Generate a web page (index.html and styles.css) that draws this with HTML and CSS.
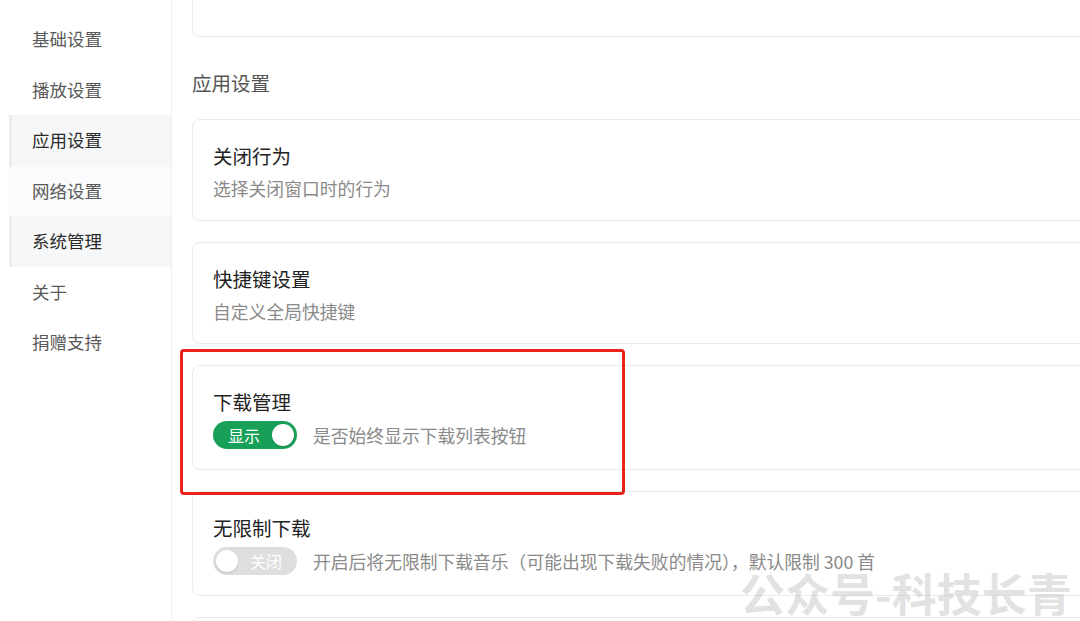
FILE: index.html
```html
<!DOCTYPE html>
<html lang="zh-CN">
<head>
    <meta charset="UTF-8">
    <title>应用设置</title>
    <link rel="stylesheet" href="styles.css">
</head>
<body>
    <div class="layout">
        <div class="sidebar">
            <div class="nav-item">基础设置</div>
            <div class="nav-item">播放设置</div>
            <div class="nav-item active">应用设置</div>
            <div class="nav-item hover">网络设置</div>
            <div class="nav-item active">系统管理</div>
            <div class="nav-item">关于</div>
            <div class="nav-item">捐赠支持</div>
        </div>

        <div class="content">
            <div class="card cut"></div>

            <div class="section-title">应用设置</div>

            <div class="card">
                <div class="card-title">关闭行为</div>
                <div class="card-desc">选择关闭窗口时的行为</div>
            </div>

            <div class="card">
                <div class="card-title">快捷键设置</div>
                <div class="card-desc">自定义全局快捷键</div>
            </div>

            <div class="card">
                <div class="card-title">下载管理</div>
                <div class="card-row">
                    <div class="switch on"><span class="switch-text">显示</span><span class="knob"></span></div>
                    <div class="card-desc">是否始终显示下载列表按钮</div>
                </div>
            </div>

            <div class="card">
                <div class="card-title">无限制下载</div>
                <div class="card-row">
                    <div class="switch off"><span class="knob"></span><span class="switch-text">关闭</span></div>
                    <div class="card-desc">开启后将无限制下载音乐（可能出现下载失败的情况），默认限制 300 首</div>
                </div>
            </div>

            <div class="card"></div>
        </div>

        <!-- 标注框和水印 -->
        <div class="mark"></div>
        <div class="watermark">公众号-科技长青</div>
    </div>
</body>
</html>
```

FILE: styles.css
```css
body {
    margin: 0;
    background: #fff;
    font-family: "Noto Sans CJK SC", "Noto Sans", sans-serif;
}
.layout {
    position: relative;
    display: flex;
    width: 1080px;
    height: 621px;
    overflow: hidden;
}
.sidebar {
    width: 162px;
    flex-shrink: 0;
    padding: 14px 0 0 9px;
    border-right: 1px solid #efefef;
}
.nav-item {
    height: 50.5px;
    line-height: 50.5px;
    padding-left: 23px;
    font-size: 17.5px;
    color: #595959;
}
.nav-item.active {
    background: #f6f7f9;
    border-left: 3px solid #ececee;
    padding-left: 20px;
    color: #2a2a2a;
}
.nav-item.hover {
    background: #fafbfc;
}
.content {
    flex: 1;
    padding-left: 20px;
    margin-right: -30px;
}
.card {
    border: 1px solid #ebebeb;
    border-radius: 8px;
    background: #fff;
    padding: 21px 20px 17.5px 20px;
    margin-bottom: 20.5px;
    min-height: 60px;
}
.card.cut {
    height: 20px;
    min-height: 0;
    margin-top: -23.5px;
    margin-bottom: 0;
}
.section-title {
    font-size: 19.5px;
    color: #555;
    line-height: 28px;
    margin: 32px 0 21.5px 0;
}
.card-title {
    font-size: 19.5px;
    color: #222;
    line-height: 30px;
    margin-bottom: 2px;
}
.card-desc {
    font-size: 17.8px;
    color: #8a8a8a;
    line-height: 30px;
}
.card-row {
    display: flex;
    align-items: center;
    gap: 16px;
    min-height: 33px;
}
.switch {
    display: flex;
    align-items: center;
    width: 84px;
    height: 28px;
    border-radius: 14px;
    box-sizing: border-box;
    padding: 0 3px;
    flex-shrink: 0;
}
.switch.on {
    background: #18a058;
}
.switch.off {
    background: #dedede;
}
.switch-text {
    flex: 1;
    text-align: center;
    color: #fff;
    font-size: 16px;
    line-height: 28px;
}
.knob {
    width: 22px;
    height: 22px;
    border-radius: 50%;
    background: #fff;
    box-shadow: 0 1px 2px rgba(0, 0, 0, 0.15);
}
.mark {
    position: absolute;
    left: 180px;
    top: 349px;
    width: 439px;
    height: 140px;
    border: 3px solid #e8231b;
    border-radius: 4px;
}
.watermark {
    position: absolute;
    left: 740px;
    top: 571px;
    font-size: 45px;
    font-weight: bold;
    line-height: 44px;
    color: rgba(190, 190, 190, 0.45);
    white-space: nowrap;
}
```
